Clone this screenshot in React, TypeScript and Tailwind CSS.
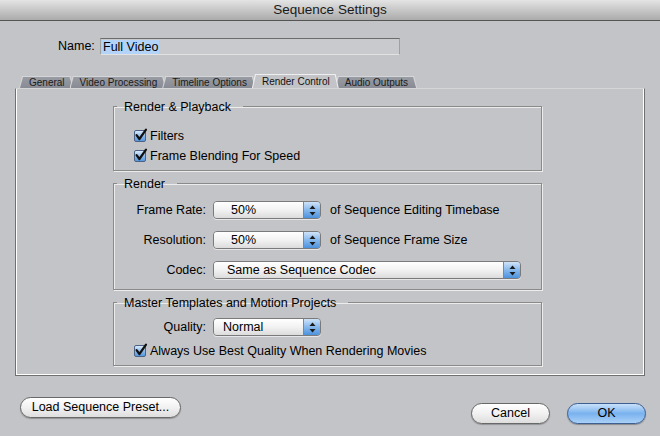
import React from 'react';

function CheckBox() {
  return (
    <span className="relative inline-block h-[12px] w-[12px] shrink-0 rounded-[2px] border border-[#4b6285] bg-gradient-to-b from-[#dcebfa] via-[#8ebaea] to-[#5597e0]">
      <svg viewBox="0 0 14 14" className="absolute -left-[1px] -top-[3px] h-[14px] w-[14px]">
        <path d="M2.6 7.2 L5.4 11 L12 1.6" fill="none" stroke="#111" strokeWidth="2.2" strokeLinecap="round" strokeLinejoin="round" />
      </svg>
    </span>
  );
}

function CheckRow({ label }: { label: string }) {
  return (
    <div className="ml-[17px] flex h-[16px] items-center gap-[4px]">
      <CheckBox />
      <span>{label}</span>
    </div>
  );
}

function Arrows() {
  return (
    <svg viewBox="0 0 7 11" className="h-[11px] w-[7px]">
      <path d="M3.5 0.5 L6.5 4 L0.5 4 Z" fill="#1a1a1a" />
      <path d="M0.5 7 L6.5 7 L3.5 10.5 Z" fill="#1a1a1a" />
    </svg>
  );
}

function Popup({ value, width, pad }: { value: string; width: string; pad: string }) {
  return (
    <div className={`flex h-[18px] ${width} overflow-hidden rounded-[4px] border border-[#7a7a7a] shadow-[0_1px_0_rgba(255,255,255,0.6)]`}>
      <div className={`flex-1 bg-gradient-to-b from-white via-[#f2f2f2] to-[#dcdcdc] ${pad} leading-[16px]`}>{value}</div>
      <div className="flex w-[17px] items-center justify-center border-l border-[#6a8bb5] bg-gradient-to-b from-[#cfe3f8] via-[#86b8ec] to-[#4c92de]">
        <Arrows />
      </div>
    </div>
  );
}

function FieldRow({ label, children }: { label: string; children: React.ReactNode }) {
  return (
    <div className="flex h-[18px] items-center">
      <span className="w-[89px] text-right">{label}</span>
      <div className="ml-[7px] flex items-center">{children}</div>
    </div>
  );
}

function Group({ title, className, children }: { title: string; className: string; children: React.ReactNode }) {
  return (
    <fieldset className={`ml-[97px] w-[429px] border border-[#8a8a8a] pl-[3px] shadow-[inset_1px_1px_0_#ececec,1px_1px_0_#ececec] ${className}`}>
      <legend className="pl-[7px] pr-[12px] pt-[2px] leading-[14px]">{title}</legend>
      {children}
    </fieldset>
  );
}

const tabs = ['General', 'Video Processing', 'Timeline Options', 'Render Control', 'Audio Outputs'];

function Tab({ label, active, first }: { label: string; active: boolean; first: boolean }) {
  if (active) {
    return (
      <div className="relative z-10 -ml-[4px] h-[14px] bg-[#eeeeef] [clip-path:polygon(3px_0,calc(100%_-_3px)_0,100%_100%,0_100%)]">
        <div className="mx-[1px] mt-[1px] h-[13px] bg-[#c3c4c8] pl-[9px] pr-[8px] text-[10px] leading-[13px] text-[#111] [clip-path:polygon(3px_0,calc(100%_-_3px)_0,100%_100%,0_100%)]">
          {label}
        </div>
      </div>
    );
  }
  return (
    <div className={`${first ? '' : '-ml-[4px]'} h-[12px] bg-[#d4d5d8] [clip-path:polygon(3px_0,calc(100%_-_3px)_0,100%_100%,0_100%)]`}>
      <div className="mx-[1px] mt-[1px] h-[11px] bg-gradient-to-b from-[#9a9ca3] to-[#888b93] pl-[9px] pr-[8px] text-[10px] leading-[11px] text-[#1b1b1b] [clip-path:polygon(3px_0,calc(100%_-_3px)_0,100%_100%,0_100%)]">
        {label}
      </div>
    </div>
  );
}

export default function App() {
  return (
    <div className="h-[436px] w-[660px] overflow-hidden bg-[#c3c4c8] font-['Liberation_Sans',Arial,sans-serif] text-[12.5px] text-black">
      <div className="flex h-[21px] items-center justify-center border-b border-[#555] bg-gradient-to-b from-[#e4e4e4] to-[#ababab] text-[13.5px] text-[#1a1a1a]">
        Sequence Settings
      </div>

      <div className="mt-[17px] flex h-[17px] items-center">
        <span className="ml-[58px] w-[42px]">Name:</span>
        <div className="flex h-[17px] w-[300px] items-center border border-[#a0a0a0] border-t-[#6c6c6c] border-b-[#e2e2e2] bg-[#c9cace] pl-[1px]">
          <span className="bg-[#b3d3f9] px-[1px] leading-[14px]">Full Video</span>
        </div>
      </div>

      <div className="mt-[19px] flex h-[14px] items-end pl-[19px]">
        {tabs.map((t, i) => (
          <Tab key={t} label={t} active={t === 'Render Control'} first={i === 0} />
        ))}
      </div>

      <div className="ml-[15px] h-[288px] w-[630px] border border-[#707070] border-t-[#d6d6d6] pt-[9px] shadow-[inset_1px_0_0_#fff,inset_-1px_0_0_#fff,inset_0_-1px_0_#fff]">
        <Group title="Render & Playback" className="pb-[6px]">
          <div className="flex flex-col gap-[4px] pt-[14px]">
            <CheckRow label="Filters" />
            <CheckRow label="Frame Blending For Speed" />
          </div>
        </Group>

        <Group title="Render" className="mt-[4px] pb-[10px]">
          <div className="flex flex-col gap-[12px] pt-[10px]">
            <FieldRow label="Frame Rate:">
              <Popup value="50%" width="w-[108px]" pad="pl-[17px]" />
              <span className="ml-[9px]">of Sequence Editing Timebase</span>
            </FieldRow>
            <FieldRow label="Resolution:">
              <Popup value="50%" width="w-[108px]" pad="pl-[17px]" />
              <span className="ml-[9px]">of Sequence Frame Size</span>
            </FieldRow>
            <FieldRow label="Codec:">
              <Popup value="Same as Sequence Codec" width="w-[308px]" pad="pl-[13px]" />
            </FieldRow>
          </div>
        </Group>

        <Group title="Master Templates and Motion Projects" className="mt-[4px] pb-[6px]">
          <div className="flex flex-col gap-[7px] pt-[8px]">
            <FieldRow label="Quality:">
              <Popup value="Normal" width="w-[108px]" pad="pl-[9px]" />
            </FieldRow>
            <CheckRow label="Always Use Best Quality When Rendering Movies" />
          </div>
        </Group>
      </div>

      <div className="flex items-start pl-[20px] pr-[14px]">
        <button className="mt-[21px] h-[21px] w-[161px] rounded-full border border-[#686868] bg-gradient-to-b from-white via-[#f1f1f1] to-[#dedede] shadow-[0_1px_1px_rgba(0,0,0,0.25)]">
          Load Sequence Preset...
        </button>
        <div className="ml-auto mt-[27px] flex gap-[17px]">
          <button className="h-[21px] w-[79px] rounded-full border border-[#686868] bg-gradient-to-b from-white via-[#f1f1f1] to-[#dedede] shadow-[0_1px_1px_rgba(0,0,0,0.25)]">
            Cancel
          </button>
          <button className="h-[21px] w-[79px] rounded-full border border-[#3d5f92] bg-gradient-to-b from-[#c9e1fa] via-[#79b2ee] to-[#a9d0f7] shadow-[0_1px_1px_rgba(0,0,0,0.3)]">
            OK
          </button>
        </div>
      </div>
    </div>
  );
}
